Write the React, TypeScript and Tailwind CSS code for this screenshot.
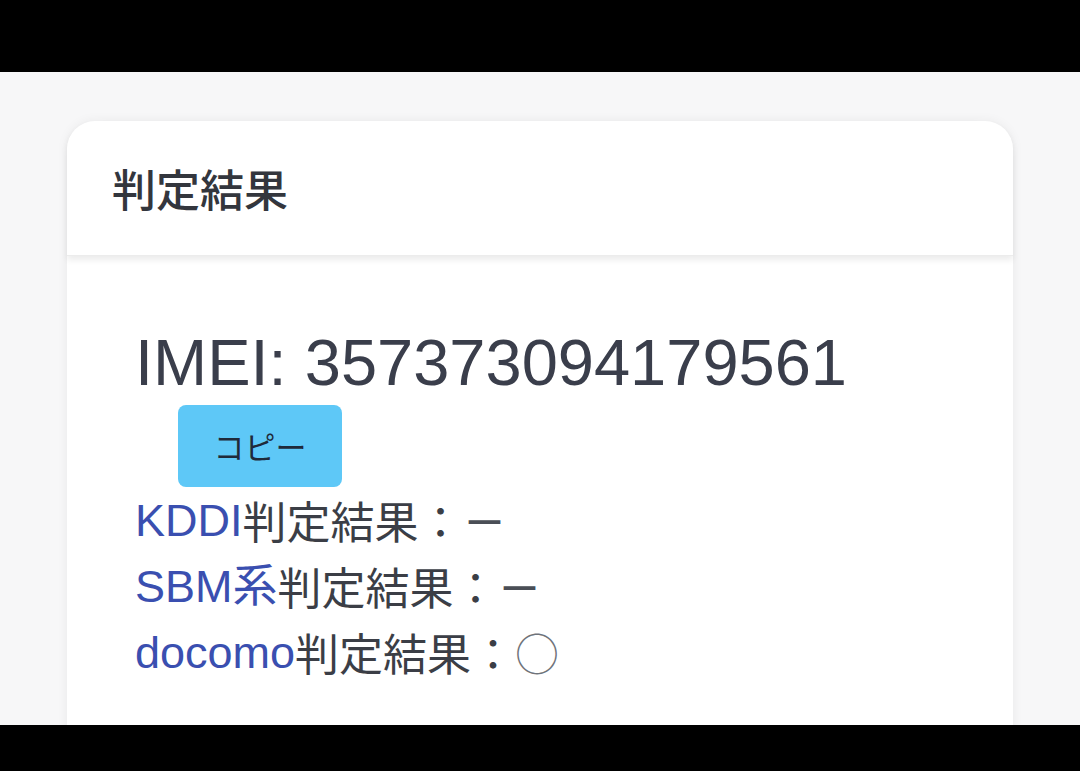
const FONT = '"Liberation Sans", "Noto Sans CJK JP", sans-serif';
const CJK = '"Noto Sans CJK JP", sans-serif';

const results = [
  { carrier: 'KDDI', value: '－', mark: false },
  { carrier: 'SBM系', value: '－', mark: false },
  { carrier: 'docomo', value: '○', mark: true },
];

export default function App() {
  return (
    <div className="h-[771px] flex flex-col bg-black overflow-hidden" style={{ fontFamily: FONT }}>
      {/* top bar */}
      <div className="h-[72px] shrink-0 bg-black" />

      {/* page */}
      <div className="flex-1 min-h-0 bg-[#f7f7f8] px-[67px] pt-[49px] overflow-hidden">
        <div className="rounded-[28px] bg-white shadow-[0_0_12px_rgba(0,0,0,0.06)] min-h-[700px]">
          {/* Header */}
          <div className="h-[135px] px-[45px] flex items-center rounded-t-[28px] shadow-[0_4px_6px_rgba(0,0,0,0.08)] border-b border-[#ececec]">
            <h2 className="text-[44px] font-medium text-[#33363d] leading-none" style={{ fontFamily: CJK }}>
              判定結果
            </h2>
          </div>

          {/* Body */}
          <div className="px-[68px] pt-[68px]">
            <div className="text-[65px] leading-[1.2] text-[#3a3e4b]">IMEI: 357373094179561</div>
            <button
              className="ml-[43px] mt-[3px] w-[164px] h-[82px] rounded-[8px] bg-[#5ec8f7] text-[31px] text-[#1f2a3a] flex items-center justify-center"
              style={{ fontFamily: CJK }}
            >
              コピー
            </button>
            <div>
              {results.map((r) => (
                <div key={r.carrier} className="flex items-center h-[66px] text-[44px] text-[#3b3e46]">
                  <span className="leading-none text-[#3a4fb0] text-[45px]">{r.carrier}</span>
                  <span className="leading-none" style={{ fontFamily: CJK }}>判定結果：</span>
                  <span
                    className={r.mark ? 'leading-none text-[#6f737a] font-light' : 'leading-none text-[#4a4e56] font-medium'}
                    style={{ fontFamily: CJK }}
                  >
                    {r.value}
                  </span>
                </div>
              ))}
            </div>
          </div>
        </div>
      </div>

      {/* bottom bar */}
      <div className="h-[46px] shrink-0 bg-black" />
    </div>
  );
}
